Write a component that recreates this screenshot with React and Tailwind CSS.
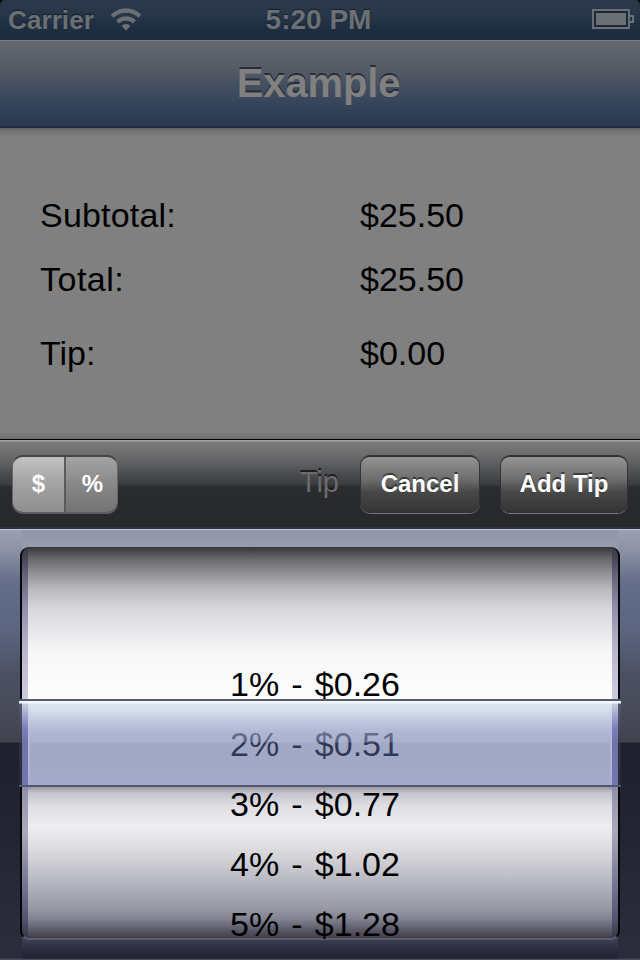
const FONT = "font-['Liberation_Sans',Arial,sans-serif]";

function StatusBar() {
  return (
    <div className="h-10 bg-black">
      <header className="grid h-10 grid-cols-[1fr_auto_1fr] items-center rounded-t-[5px] bg-[linear-gradient(to_bottom,#2d3a4c_0%,#263548_40%,#1f2d41_70%,#1e2c40_100%)] text-[#6b7075] [text-shadow:0_-1px_1px_rgba(0,0,0,0.45)]">
        <div className="flex items-center gap-4 pl-2">
          <span className="text-[26px] leading-10 font-bold tracking-[0.1px]">Carrier</span>
          <svg width="32" height="24" viewBox="0 0 32 24" className="-mt-[2px]" fill="#6b7075">
            <path d="M0.7 7.7 A21.5 21.5 0 0 1 31.3 7.7 L28.4 10.8 A17.5 17.5 0 0 0 3.6 10.8 Z" />
            <path d="M6.2 13.4 A13.8 13.8 0 0 1 25.8 13.4 L22.9 16.4 A9.7 9.7 0 0 0 9.1 16.4 Z" />
            <path d="M11.6 18.9 A6.2 6.2 0 0 1 20.4 18.9 L16 23.4 Z" />
          </svg>
        </div>
        <span className="mr-[3px] text-[28px] leading-10 font-bold">5:20 PM</span>
        <svg width="42" height="20" viewBox="0 0 42 20" className="mr-[6px] -mt-[2px] justify-self-end">
          <rect x="1" y="1" width="36" height="18" fill="#1c293c" stroke="#6b7075" strokeWidth="2" />
          <rect x="4" y="4" width="30" height="12" fill="#6b7075" />
          <path d="M38 7H41V13H38" fill="none" stroke="#6b7075" strokeWidth="2" />
        </svg>
      </header>
    </div>
  );
}

function NavBar() {
  return (
    <nav className="flex h-[88px] items-center justify-center border-t border-b-2 border-t-[#777b80] border-b-[#1f2c41] bg-[linear-gradient(to_bottom,#646870_0%,#565b67_33%,#465060_50%,#36465a_72%,#2b394f_100%)] pr-[3px] pb-[2px]">
      <h1 className="text-[40px] leading-[44px] font-bold tracking-[-0.15px] text-[#808080] [text-shadow:0_-2px_0_#252d39]">Example</h1>
    </nav>
  );
}

function Summary() {
  return (
    <main className="h-[311px] bg-[#808080] bg-[linear-gradient(to_bottom,#636363_0px,#757575_4px,#808080_8px,#808080_303px,#707070_310px)] pt-[66px] pl-10 text-[34px] leading-[42px] text-black">
      <dl className="grid grid-cols-[320px_1fr] grid-rows-[64px_74px_42px]">
        <dt className="tracking-[0.2px]">Subtotal:</dt>
        <dd>$25.50</dd>
        <dt className="tracking-[0.5px]">Total:</dt>
        <dd>$25.50</dd>
        <dt>Tip:</dt>
        <dd>$0.00</dd>
      </dl>
    </main>
  );
}

function BarButton({ children, className }) {
  return (
    <button
      className={
        "h-[58px] rounded-[10px] border-t-2 border-x border-[#333336] bg-[linear-gradient(to_bottom,#949494_0%,#6d6d6d_40%,#484848_62%,#333333_100%)] pb-[2px] text-2xl font-bold text-white shadow-[0_1px_0_#747474] [text-shadow:0_-2px_0_rgba(0,0,0,0.5)] " +
        className
      }
    >
      {children}
    </button>
  );
}

function Toolbar() {
  return (
    <div className="flex h-[90px] items-start border-t border-b-2 border-t-black border-b-[#2b3241] bg-[linear-gradient(to_bottom,#a2a2a2_0px,#a2a2a2_1px,#7b7b7b_2px,#67686a_18px,#48494c_36px,#3a3b3e_45px,#2b2d31_46px,#27292d_60px,#27292c_88px)] pt-[15px]">
      <div className="ml-3 flex h-[59px] w-[106px] overflow-hidden rounded-[11px] border-x border-y-2 border-t-[#464648] border-x-[#666] border-b-[#5d5d5e] text-2xl font-bold text-white [text-shadow:0_-2px_0_rgba(0,0,0,0.4)]">
        <button className="w-[53px] border-r-2 border-[#5b5b5b] bg-[linear-gradient(to_bottom,#c2c2c2,#a2a2a2_50%,#8e8e8e)] pb-[2px]">$</button>
        <button className="flex-1 bg-[linear-gradient(to_bottom,#a3a3a3,#858585_55%,#737373)] pb-[2px] pl-[2px]">%</button>
      </div>
      <span className="ml-auto pt-[10px] text-[29px] leading-[34px] text-[#6b6b6b] [text-shadow:0_-2px_0_#1d1d1f]">Tip</span>
      <BarButton className="ml-[21px] w-[120px]">Cancel</BarButton>
      <BarButton className="mr-3 ml-5 w-32">Add Tip</BarButton>
    </div>
  );
}

const OPTIONS = ["1% - $0.26", "2% - $0.51", "3% - $0.77", "4% - $1.02", "5% - $1.28"];

// Translucent band that marks the selected row
function SelectionLens() {
  return (
    <div className="absolute top-[169px] right-[19px] left-[19px] flex h-[88px] border-y-2 border-[#505a71]">
      <div className="w-[3px] bg-[linear-gradient(to_bottom,#f0f4fa_0px,#f0f4fa_2px,#555869_3px,#3d3f4f_41px,#2b2d3a_42px,#2b2d3a_85px)]" />
      <div className="w-[6px] bg-[linear-gradient(to_bottom,#f0f4fa_0px,#f0f4fa_2px,#c6cae0_3px,#a4a8cf_14px,#797dba_28px,#6f73ab_42px,#7276b0_85px)]" />
      <div className="w-[2px] bg-[linear-gradient(to_bottom,#f8faff_0px,#f8faff_2px,#d8dfee_3px,#b5bcda_30px,#a9b1d2_85px)]" />
      <div className="flex-1 bg-[linear-gradient(to_bottom,#f4f8fc_0px,#f4f8fc_2px,rgba(211,220,236,0.8)_3px,rgba(203,212,231,0.78)_10px,rgba(174,182,213,0.76)_20px,rgba(146,156,196,0.72)_31px,rgba(133,143,189,0.69)_41px,rgba(87,100,153,0.55)_42px,rgba(87,98,153,0.55)_60px,rgba(93,103,163,0.55)_85px)]" />
      <div className="w-[2px] bg-[linear-gradient(to_bottom,#f8faff_0px,#f8faff_2px,#d8dfee_3px,#b5bcda_30px,#a9b1d2_85px)]" />
      <div className="w-[6px] bg-[linear-gradient(to_bottom,#f0f4fa_0px,#f0f4fa_2px,#c6cae0_3px,#a4a8cf_14px,#797dba_28px,#6f73ab_42px,#7276b0_85px)]" />
      <div className="w-[3px] bg-[linear-gradient(to_bottom,#f0f4fa_0px,#f0f4fa_2px,#555869_3px,#3d3f4f_41px,#2b2d3a_42px,#2b2d3a_85px)]" />
    </div>
  );
}

function TipPicker() {
  return (
    <section className="relative h-[431px] border-t border-[#c0c4d4] bg-[linear-gradient(to_bottom,#9ba0b0_0px,#8f95a8_18px,#646d89_52px,#5c6580_100px,#4c5162_145px,#434350_212px,#1e202d_213px,#232532_300px,#2c2d3a_428px,#55586a_430px)]">
      <div className="mx-[22px] h-full bg-[linear-gradient(to_bottom,#9094a6_0px,#979db0_17px,#505366_40px,#505366_400px,#3a3c52_410px,#20222e_428px,#55586a_430px)] pt-[17px]">
        <div className="-mx-[2px] h-[393px] rounded-[9px] border-x-2 border-b-2 border-x-[#050608] border-b-[#5d5c6d] bg-[linear-gradient(to_bottom,#353441_0px,#67657c_30px,#8e8ca8_60px,#b6b5cd_100px,#cccbde_150px,#cccbde_238px,#8b8aa2_239px,#9a9ab2_255px,#a9a8bd_285px,#73738f_340px,#565674_370px,#353442_392px)] px-[6px]">
          <ul className="h-full bg-[linear-gradient(to_bottom,#363639_0px,#69696c_12px,#929295_27px,#b9b9bd_42px,#d7d7dc_62px,#e4e4e7_80px,#f6f7f7_105px,#fcfdfc_150px,#fcfdfc_238px,#8f8e9a_239px,#c4c4ce_246px,#dedee3_259px,#eeeff1_280px,#dedee0_300px,#bfbfc8_328px,#9999a7_360px,#858594_371px,#535260_385px,#3c3b43_392px)] pt-[107px] pr-[10px] text-center text-[34px] leading-[60px] text-black [word-spacing:2.7px]">
            {OPTIONS.map((option) => (
              <li key={option} className="h-[60px]">{option}</li>
            ))}
          </ul>
        </div>
      </div>
      <SelectionLens />
    </section>
  );
}

export default function App() {
  return (
    <div className={"flex h-[960px] w-[640px] flex-col overflow-hidden bg-black " + FONT}>
      <StatusBar />
      <NavBar />
      <Summary />
      <Toolbar />
      <TipPicker />
    </div>
  );
}
